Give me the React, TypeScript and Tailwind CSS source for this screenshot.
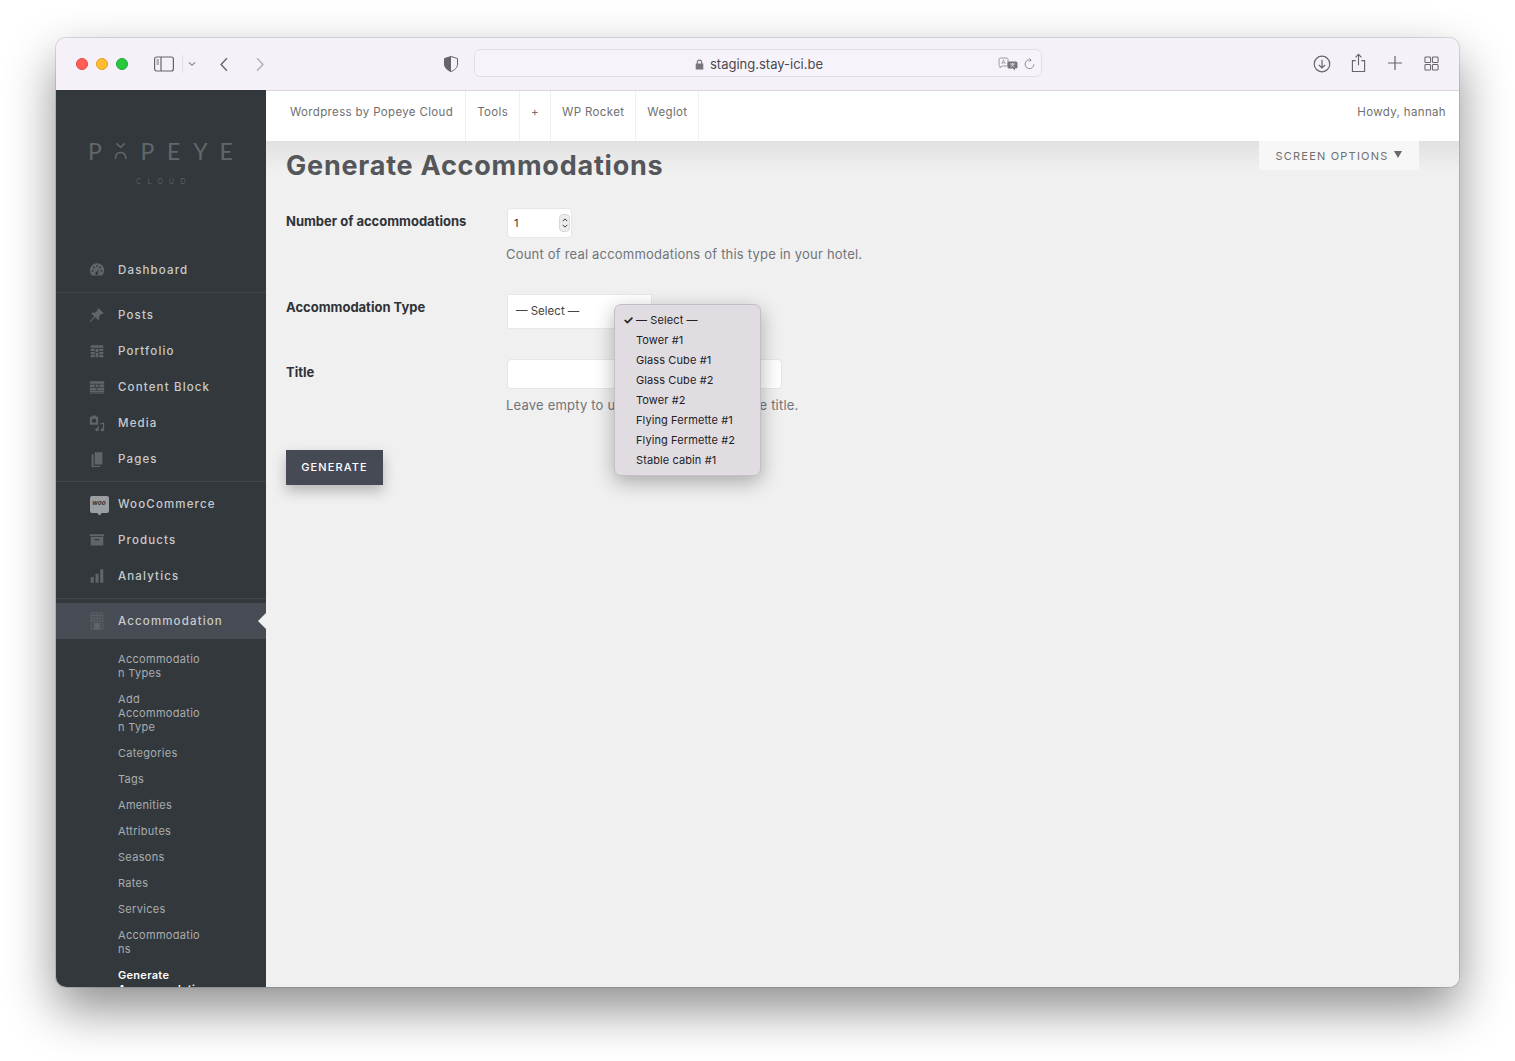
import type { ReactNode } from "react";

const gotham = "font-['Inter','Noto_Sans',sans-serif]";

function Svg({ children }: { children: ReactNode }) {
    return (
        <svg viewBox="0 0 20 20" className="w-[18px] h-[18px]" fill="currentColor">
            {children}
        </svg>
    );
}

const icons: Record<string, ReactNode> = {
    dashboard: (
        <Svg>
            <path fillRule="evenodd" d="M10 2.500a8 8 0 0 0-6.600 12.500l1 1.200h11.200l1-1.200A8 8 0 0 0 10 2.500zM5 10a1 1 0 1 1 0 2 1 1 0 0 1 0-2zm1.600-3.800a1 1 0 1 1 0 2 1 1 0 0 1 0-2zm6.800 0a1 1 0 1 1 0 2 1 1 0 0 1 0-2zM10 4.600a1 1 0 1 1 0 2 1 1 0 0 1 0-2zm5 5.400a1 1 0 1 1 0 2 1 1 0 0 1 0-2zm-2.600-1.800-1.500 4.300a1.700 1.700 0 1 1-1.500-.4z" />
        </Svg>
    ),
    posts: (
        <Svg>
            <path d="m12 2.500 5.500 5.500-1.300 1-1.100-.4-2.800 2.800.2 3.200-1.100 1.100-3.300-3.300L2.500 18l-.8.300.2-1 5-5.700-3.300-3.300 1.100-1.100 3.200.3 2.800-2.800-.4-1.100z" />
        </Svg>
    ),
    portfolio: (
        <Svg>
            <path d="M3 3.500h14v3H3zM3 7.500h4.500v2.500H3zM8.500 7.500h3V11h-3zM12.500 7.500H17v2.500h-4.500zM3 11h4.500v2.500H3zM12.500 11H17v2.500h-4.500zM3 14.500h4.500V17H3zM8.500 12h3v5h-3zM12.500 14.500H17V17h-4.500z" />
        </Svg>
    ),
    block: (
        <Svg>
            <path d="M2 3.500h16v3H2zM2 7.300h5.500v2.700H2zM8.500 7.300h3V10h-3zM12.500 7.300H18V10h-5.500zM2 10.800h7.500v2.700H2zM10.500 10.800H18v2.700h-7.500zM2 14.300h16v1.200H2zM2 16.200h16v1H2z" />
        </Svg>
    ),
    media: (
        <Svg>
            <path fillRule="evenodd" d="M2 3h2.500l.8-1.200h3.400L9.500 3h1.800v9H2zM6.700 5a2.500 2.500 0 1 0 0 5 2.500 2.500 0 0 0 0-5z" />
            <path d="M18 9.500v8a2 1.600 0 1 1-1.500-1.500v-4.800l-3 .6V10.300zM12 13.500v4a2 1.600 0 1 1-1.500-1.500v-2.500z" />
        </Svg>
    ),
    pages: (
        <Svg>
            <path d="M7.500 2.500h8.500v13.500H7.500zM4 5h2.200v12.500h7.300V19H4z" />
        </Svg>
    ),
    products: (
        <Svg>
            <path fillRule="evenodd" d="M2 3.500h16v2.300H2zM3 6.800h14V16H3zM7.500 9v1.300h5V9z" />
        </Svg>
    ),
    analytics: (
        <Svg>
            <path d="M3 11h3.400v6.500H3zM8.300 7.500h3.400v10H8.300zM13.600 2.500H17v15h-3.400z" />
        </Svg>
    ),
    accommodation: (
        <svg viewBox="0 0 20 20" className="w-[18px] h-[18px]" fill="none" stroke="currentColor" strokeWidth="0.9">
            <path d="M3.500 1h13v18h-13zM6.700 1v18M10 1v18M13.300 1v18M3.500 4h13M3.500 7h13M3.500 10h13" />
            <path d="M7.500 12.500h5V19h-5z" fill="currentColor" />
        </svg>
    ),
};

type NavItem = { label: string; icon: string };

const firstGroup: NavItem[] = [
    { label: "Posts", icon: "posts" },
    { label: "Portfolio", icon: "portfolio" },
    { label: "Content Block", icon: "block" },
    { label: "Media", icon: "media" },
    { label: "Pages", icon: "pages" },
];

const subItems: string[][] = [
    ["Accommodatio", "n Types"],
    ["Add", "Accommodatio", "n Type"],
    ["Categories"],
    ["Tags"],
    ["Amenities"],
    ["Attributes"],
    ["Seasons"],
    ["Rates"],
    ["Services"],
    ["Accommodatio", "ns"],
];

const options = ["— Select —", "Tower #1", "Glass Cube #1", "Glass Cube #2", "Tower #2", "Flying Fermette #1", "Flying Fermette #2", "Stable cabin #1"];

function NavRow({ label, icon }: { label: string; icon: ReactNode }) {
    return (
        <div className="h-9 flex items-center pl-[31px]">
            <span className="w-5 h-5 flex items-center justify-center text-[#5f6569]">{icon}</span>
            <span className="ml-[11px] pt-[2px] text-[11.500px] font-medium tracking-[1.150px] text-[#c8cbcd]">{label}</span>
        </div>
    );
}

function Divider() {
    return <div className="h-px bg-[#41474c]" />;
}

function SafariBar() {
    return (
        <div className="relative h-[52px] shrink-0 bg-[#f6f1f9] flex items-center text-[#66656a]">
            <div className="flex items-center gap-2 ml-5">
                <span className="w-3 h-3 rounded-full bg-[#ff5f57] border border-[#e1483f]" />
                <span className="w-3 h-3 rounded-full bg-[#febc2e] border border-[#dfa023]" />
                <span className="w-3 h-3 rounded-full bg-[#28c840] border border-[#1eaa32]" />
            </div>
            <svg viewBox="0 0 20 16" className="w-5 h-4 ml-[26px]" fill="none" stroke="currentColor" strokeWidth="1.2">
                <rect x="0.6" y="1" width="18.800" height="14" rx="2" />
                <path d="M7 1v14" />
                <path d="M2.500 4h2.500M2.500 6h2.500M2.500 8h2.500" strokeWidth="0.9" />
            </svg>
            <div className="w-px h-[18px] bg-[#e4e0e6] ml-2" />
            <svg viewBox="0 0 10 6" className="w-2 h-[6px] ml-[5px]" fill="none" stroke="#85848a" strokeWidth="1.4">
                <path d="m1 1 4 3.500L9 1" />
            </svg>
            <svg viewBox="0 0 10 18" className="w-[10px] h-[15px] ml-[23px]" fill="none" stroke="currentColor" strokeWidth="1.7">
                <path d="M8.500 1.500 1.500 9l7 7.500" />
            </svg>
            <svg viewBox="0 0 10 18" className="w-[10px] h-[15px] ml-[26px]" fill="none" stroke="#b0afb4" strokeWidth="1.7">
                <path d="m1.500 1.500 7 7.500-7 7.500" />
            </svg>
            <svg viewBox="0 0 14 16" className="w-[14px] h-4 ml-[179px]">
                <path d="M7 .5 13.500 2.500V8c0 3.500-2.500 6-6.500 7.500C3 14 .5 11.500.5 8V2.500z" fill="#f6f1f9" stroke="#66656a" />
                <path d="M7 .5 .5 2.500V8c0 3.500 2.500 6 6.500 7.500z" fill="#66656a" />
            </svg>
            <div className="relative w-[568px] h-7 ml-4 mb-[2px] rounded-md border border-[#e3dfe5] bg-[#f7f3fa] flex items-center justify-center">
                <svg viewBox="0 0 10 12" className="w-[9px] h-[11px] ml-[2px] mr-[6px] mt-[2px]" fill="#77767b">
                    <path d="M2 5V3.500a3 3 0 0 1 6 0V5h1.200v6.500H.8V5zm1.200 0h3.600V3.500a1.800 1.800 0 0 0-3.600 0z" />
                </svg>
                <span className="pt-[3px] font-['Inter',sans-serif] text-[13px] text-[#4a494e]">staging.stay-ici.be</span>
                <svg viewBox="0 0 20 14" className="absolute left-[523px] top-[7px] w-5 h-[14px]">
                    <path d="M1 2.500a1.500 1.500 0 0 1 1.500-1.500h6A1.500 1.500 0 0 1 10 2.500v5A1.500 1.500 0 0 1 8.500 9H4l-2 2V9A1.500 1.500 0 0 1 1 7.500z" fill="none" stroke="#9a999e" />
                    <path d="M3.800 7 5.500 2.800 7.200 7M4.400 5.600h2.200" fill="none" stroke="#9a999e" strokeWidth="0.8" />
                    <path d="M11 4.500h7a1.500 1.500 0 0 1 1.500 1.500v4a1.500 1.500 0 0 1-1.500 1.500H17v2l-2-2h-4A1.500 1.500 0 0 1 9.500 10V6A1.500 1.500 0 0 1 11 4.500z" fill="#77767b" />
                    <path d="M12 7h5M14.500 6v1M12.800 10l2.800-3M13.500 7.500l2.800 2.500" fill="none" stroke="#f6f1f9" strokeWidth="0.7" />
                </svg>
                <svg viewBox="0 0 12 13" className="absolute left-[549px] top-[8px] w-[11px] h-3" fill="none" stroke="#85848a" strokeWidth="1">
                    <path d="M7.500 2.200A4.800 4.800 0 1 0 10.800 7M6 .5l1.800 1.700L6 4" />
                </svg>
            </div>
            <svg viewBox="0 0 18 18" className="w-[18px] h-[18px] absolute left-[1257px] top-[17px]" fill="none" stroke="currentColor" strokeWidth="1.200">
                <circle cx="9" cy="9" r="7.800" />
                <path d="M9 4.800v8M5.800 9.800 9 13l3.200-3.200" />
            </svg>
            <svg viewBox="0 0 16 21" className="w-[15px] h-5 absolute left-[1295px] top-[15px]" fill="none" stroke="currentColor" strokeWidth="1.200">
                <path d="M5 8H1.500v11.500h13V8H11M8 13V1.500M4.800 4.500 8 1.300l3.200 3.200" />
            </svg>
            <svg viewBox="0 0 16 16" className="w-4 h-4 absolute left-[1331px] top-[17px]" fill="none" stroke="currentColor" strokeWidth="1.200">
                <path d="M8 1v14M1 8h14" />
            </svg>
            <svg viewBox="0 0 16 16" className="w-[15px] h-[15px] absolute left-[1368px] top-[18px]" fill="none" stroke="currentColor" strokeWidth="1.100">
                <rect x="1" y="1" width="6" height="6" rx="1" />
                <rect x="9" y="1" width="6" height="6" rx="1" />
                <rect x="1" y="9" width="6" height="6" rx="1" />
                <rect x="9" y="9" width="6" height="6" rx="1" />
            </svg>
        </div>
    );
}

function Sidebar() {
    return (
        <aside className={`w-[210px] shrink-0 bg-[#33383c] overflow-hidden ${gotham}`}>
            <div className="h-[162px] pt-[47px] flex flex-col">
                <div className="flex items-center pl-[32px] font-['Lato',sans-serif] font-normal text-[23px] leading-[28px] text-[#62676b]">
                    <span className="w-[26.300px]">P</span>
                    <svg viewBox="0 0 14 20" className="w-[26.300px] h-5 pr-[13px]" fill="none" stroke="currentColor" strokeWidth="1.500">
                        <path d="m2.500 2 4.500 4 4.500-4M1.500 18.500c0-4.500 2-7 5.500-7s5.500 2.500 5.500 7" />
                    </svg>
                    <span className="w-[26.300px]">P</span>
                    <span className="w-[26.300px]">E</span>
                    <span className="w-[26.300px]">Y</span>
                    <span>E</span>
                </div>
                <div className="mt-[12px] pl-[80px] text-[7px] leading-[10px] font-light tracking-[6.300px] text-[#666b6f]">CLOUD</div>
            </div>
            <div className="h-[36px] flex flex-col justify-center">
                <NavRow label="Dashboard" icon={icons.dashboard} />
            </div>
            <div className="mt-[4px]">
                <Divider />
            </div>
            <div className="py-[4px]">
                {firstGroup.map((item) => (
                    <NavRow key={item.label} label={item.label} icon={icons[item.icon]} />
                ))}
            </div>
            <Divider />
            <div className="py-[4px]">
                <NavRow
                    label="WooCommerce"
                    icon={
                        <span className="relative shrink-0 ml-[4px] w-[19px] h-[17px] rounded-[2px] bg-[#9b9ea0] flex items-center justify-center text-[6.500px] font-bold italic text-[#33383c]">
                            woo
                            <span className="absolute bottom-[-2px] left-[8px] w-[3px] h-[3px] rotate-45 bg-[#9b9ea0]" />
                        </span>
                    }
                />
                <NavRow label="Products" icon={icons.products} />
                <NavRow label="Analytics" icon={icons.analytics} />
            </div>
            <Divider />
            <div className="relative mt-[4px] bg-[#474c54]">
                <NavRow label="Accommodation" icon={icons.accommodation} />
                <span className="absolute right-0 top-[10px] w-0 h-0 border-y-[8px] border-y-transparent border-r-[8px] border-r-[#f0f0f0]" />
            </div>
            <div className="pt-[7px] pl-[62px] pb-2">
                {subItems.map((lines) => (
                    <div key={lines.join("")} className="py-[6px] text-[11px] leading-[14px] tracking-[0.3px] text-[#a9adb0]">
                        {lines.map((line) => (
                            <div key={line}>{line}</div>
                        ))}
                    </div>
                ))}
                <div className="py-[6px] text-[11px] leading-[14px] tracking-[0.3px] font-semibold text-white">
                    <div>Generate</div>
                    <div>Accommodatio</div>
                    <div>ns</div>
                </div>
            </div>
        </aside>
    );
}

function TopBar() {
    const links = ["Wordpress by Popeye Cloud", "Tools", "+", "WP Rocket", "Weglot"];
    return (
        <div className="h-[51px] shrink-0 bg-white border-t border-[#d9d6db] flex items-stretch justify-between pl-3 pr-[13px] text-[11.500px] tracking-[0.35px] text-[#6f6f6f]">
            <div className="flex">
                {links.map((link) => (
                    <span key={link} className="px-[11px] first:px-3 pb-[6px] flex items-center border-r border-[#f0f0f0]">
                        {link}
                    </span>
                ))}
            </div>
            <span className="pb-[6px] flex items-center">Howdy, hannah</span>
        </div>
    );
}

function FormRow({ label, children, className }: { label: string; children: ReactNode; className: string }) {
    return (
        <div className={`flex ${className}`}>
            <label className="w-[220px] shrink-0 pt-[3px] text-[13px] leading-5 font-bold text-[#2f3338]">{label}</label>
            <div>{children}</div>
        </div>
    );
}

function Content() {
    return (
        <main className="relative grow bg-[linear-gradient(#e1e1e1,#f0f0f0_30px)] bg-[#f0f0f0] px-5">
            <div className="absolute right-[40px] top-0 w-[160px] h-[29px] pt-[2px] bg-[#f7f7f7] flex items-center justify-center text-[11px] tracking-[1.200px] text-[#6f6f6f]">
                SCREEN OPTIONS
                <span className="ml-[6px] mt-[-4px] w-0 h-0 border-x-[4px] border-x-transparent border-t-[7px] border-t-[#6a6a6a]" />
            </div>
            <h1 className="pt-[7px] text-[27px] leading-9 font-bold tracking-[0.77px] text-[#54565a]">Generate Accommodations</h1>
            <FormRow label="Number of accommodations" className="mt-[24px]">
                <div className="relative ml-px w-[65px] h-[30px] bg-white rounded-[4px] border border-[#e6e6e6] pl-[6px] flex items-center text-[11px] text-[#333]">
                    1
                    <span className="absolute right-[1px] top-[5px] w-[11px] h-[18px] rounded-[4px] bg-[#ececec] border border-[#d8d8d8] flex flex-col items-center justify-center gap-[2px]">
                        <svg viewBox="0 0 8 5" className="w-[6px] h-1" fill="none" stroke="#333" strokeWidth="1.300"><path d="m1 4 3-3 3 3" /></svg>
                        <svg viewBox="0 0 8 5" className="w-[6px] h-1" fill="none" stroke="#333" strokeWidth="1.300"><path d="m1 1 3 3 3-3" /></svg>
                    </span>
                </div>
                <p className="mt-[6px] text-[13px] leading-5 tracking-[0.2px] text-[#70747a]">Count of real accommodations of this type in your hotel.</p>
            </FormRow>
            <FormRow label="Accommodation Type" className="mt-[30px]">
                <div className="ml-px w-[145px] h-[35px] bg-white border border-[#e8e8e8] pl-[8px] flex items-center text-[11.500px] text-[#444]">— Select —</div>
            </FormRow>
            <FormRow label="Title" className="mt-[30px]">
                <div className="ml-px w-[275px] h-[30px] bg-white rounded-[4px] border border-[#e6e6e6]" />
                <p className="mt-[6px] text-[13px] leading-5 tracking-[0.2px] text-[#70747a]">Leave empty to use accommodation type title.</p>
            </FormRow>
            <button className="mt-[35px] w-[97px] h-[35px] bg-[#454a54] text-white text-[11px] font-medium tracking-[1.100px] shadow-[0_6px_14px_rgba(0,0,0,0.25)]">GENERATE</button>
            <div className="absolute left-[348px] top-[163px] w-[147px] h-[172px] pt-[5px] rounded-[7px] bg-[#e1dce2] border border-[#c4bfc6] shadow-[0_6px_20px_rgba(0,0,0,0.3)] font-['Inter',sans-serif] text-[11px] tracking-[0.1px] text-[#222]">
                {options.map((option, i) => (
                    <div key={option} className="relative h-5 pl-[21px] flex items-center">
                        {i === 0 && <span className="absolute left-[8px] text-[12px] font-bold">✓</span>}
                        {option}
                    </div>
                ))}
            </div>
        </main>
    );
}

export default function App() {
    return (
        <div className="w-[1515px] h-[1061px] bg-white overflow-hidden pt-[38px] pl-[56px]">
            <div className="w-[1403px] h-[949px] rounded-[10px] overflow-hidden flex flex-col shadow-[0_0_0_1px_rgba(0,0,0,0.12),0_22px_50px_rgba(0,0,0,0.45)]">
                <SafariBar />
                <div className={`flex grow min-h-0 ${gotham}`}>
                    <Sidebar />
                    <div className="grow flex flex-col min-w-0">
                        <TopBar />
                        <Content />
                    </div>
                </div>
            </div>
        </div>
    );
}
